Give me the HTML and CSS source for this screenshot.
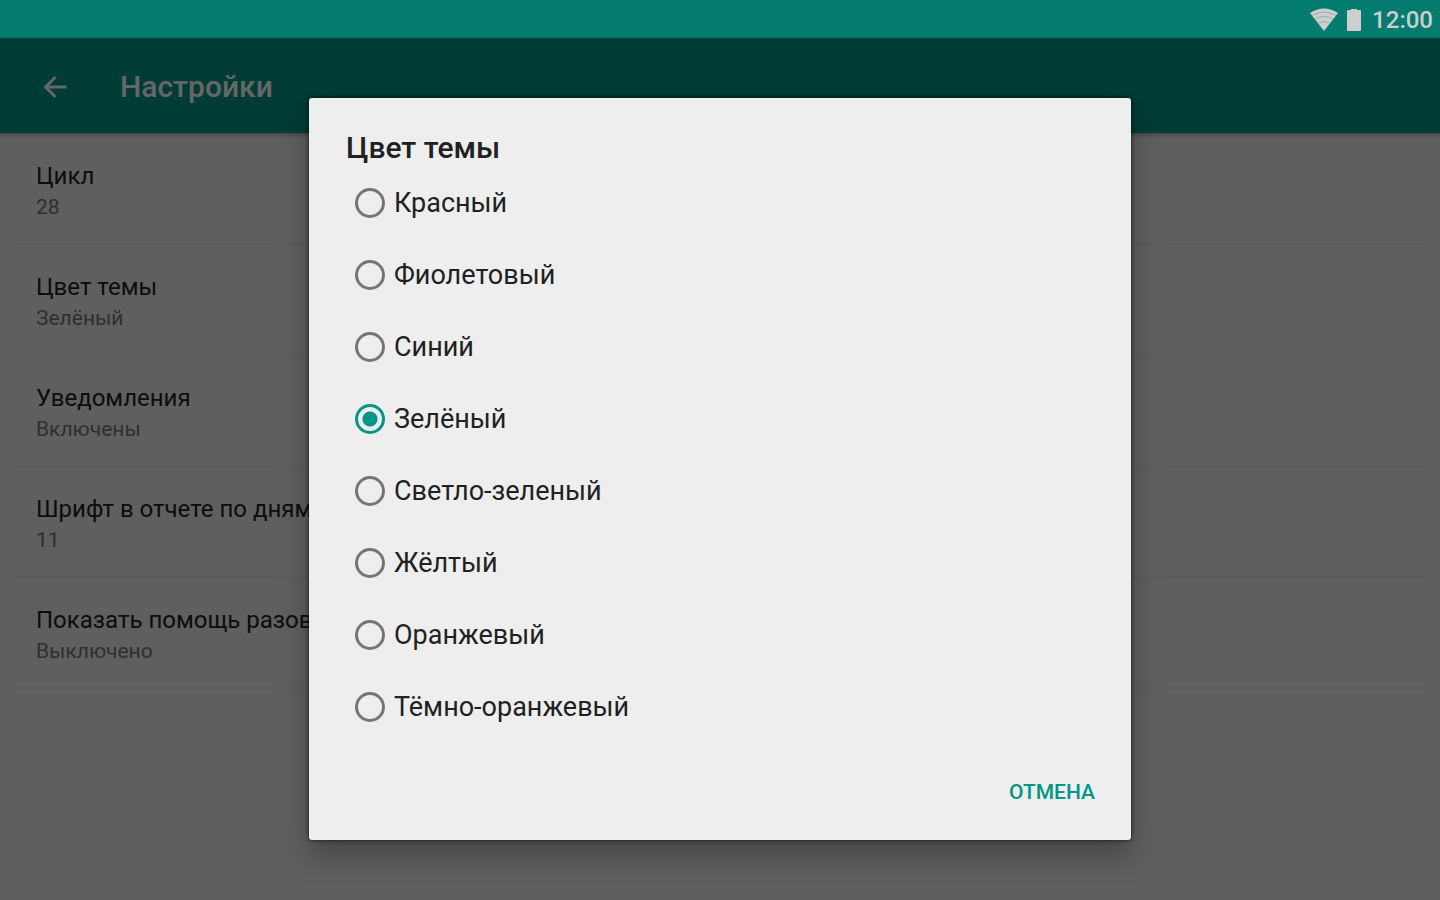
FILE: index.html
```html
<!DOCTYPE html>
<html lang="ru">
<head>
<meta charset="utf-8">
<title>Настройки</title>
<link rel="stylesheet" href="styles.css">
</head>
<body>
<div class="statusbar">
  <svg class="wifi" viewBox="0 0 30 24" aria-hidden="true">
    <path class="fill" d="M1 5Q15-4 29 5L15 23Z"/>
    <path class="arc" d="M3 7.500Q15 .5 27 7.500M6 11Q15 6 24 11M9 15Q15 12 21 15"/>
  </svg>
  <svg class="battery" viewBox="0 0 16 24" aria-hidden="true">
    <path class="fill" d="M5 1h6v1h3q1 0 1 1v19q0 1-1 1H2q-1 0-1-1V3q0-1 1-1h3z"/>
  </svg>
  <span class="clock">12:00</span>
</div>
<div class="screen">
  <header class="toolbar">
    <button class="back" type="button" aria-label="Назад">
      <svg viewBox="0 0 24 24" aria-hidden="true"><path d="M23.500 12H2.500M12.500 2L2.500 12L12.500 22"/></svg>
    </button>
    <h1 class="heading">Настройки</h1>
  </header>
  <ul class="settings">
    <li class="setting"><span class="name">Цикл</span><span class="value">28</span></li>
    <li class="setting"><span class="name">Цвет темы</span><span class="value">Зелёный</span></li>
    <li class="setting"><span class="name">Уведомления</span><span class="value">Включены</span></li>
    <li class="setting"><span class="name">Шрифт в отчете по дням</span><span class="value">11</span></li>
    <li class="setting"><span class="name">Показать помощь разово</span><span class="value">Выключено</span></li>
  </ul>
  <div class="scrim">
    <form class="dialog" role="dialog" aria-labelledby="dialog-title">
      <h2 class="title" id="dialog-title">Цвет темы</h2>
      <div class="options">
        <label class="option"><input type="radio" name="theme">Красный</label>
        <label class="option"><input type="radio" name="theme">Фиолетовый</label>
        <label class="option"><input type="radio" name="theme">Синий</label>
        <label class="option"><input type="radio" name="theme" checked>Зелёный</label>
        <label class="option"><input type="radio" name="theme">Светло-зеленый</label>
        <label class="option"><input type="radio" name="theme">Жёлтый</label>
        <label class="option"><input type="radio" name="theme">Оранжевый</label>
        <label class="option"><input type="radio" name="theme">Тёмно-оранжевый</label>
      </div>
      <div class="actions"><button class="cancel" type="button">ОТМЕНА</button></div>
    </form>
  </div>
</div>
</body>
</html>
```
FILE: styles.css
```css
* { box-sizing: border-box; }
body {
  margin: 0;
  min-height: 100vh;
  display: flex;
  flex-direction: column;
  font-family: Roboto, "Noto Sans", sans-serif;
  color: #212121;
  background: #eee;
}
.statusbar {
  display: flex;
  justify-content: flex-end;
  align-items: center;
  height: 38px;
  padding: 2px 7px 0 0;
  background: #037b6e;
  color: #cccfcd;
}
.wifi { width: 30px; height: 24px; }
.battery { width: 16px; height: 24px; margin: 0 10px 0 7px; }
.fill { fill: #cccfcd; }
.arc { fill: none; stroke: #8fb5ae; stroke-width: 1; }
.clock { font-size: 24px; line-height: 32px; font-weight: 500; }
.screen {
  position: relative;
  flex: 1;
  display: flex;
  flex-direction: column;
}
.toolbar {
  display: flex;
  align-items: center;
  gap: 36px;
  height: 95px;
  padding: 2px 26px 0;
  background: #009688;
  box-shadow: 0 2px 4px rgba(0, 0, 0, .3);
}
.back {
  display: flex;
  justify-content: center;
  width: 58px;
  padding: 0;
  border: 0;
  background: none;
}
.back svg { width: 24px; height: 24px; fill: none; stroke: #fff; stroke-width: 3; }
.heading { margin: 0; font-size: 30px; line-height: 36px; font-weight: 500; color: #fff; }
.settings { list-style: none; margin: 0; padding: 1px 14px 0; }
.setting {
  display: flex;
  flex-direction: column;
  height: 111px;
  padding: 26px 22px 0;
  border-bottom: 2px solid #e6e6e6;
}
.name { font-size: 24px; line-height: 32px; }
.value { font-size: 21px; line-height: 30px; color: #757575; }
.scrim {
  position: absolute;
  inset: 0;
  display: flex;
  align-items: center;
  justify-content: center;
  background: rgba(0, 0, 0, .6);
}
.dialog {
  width: 822px;
  max-width: 90%;
  padding: 32px 36px 24px 37px;
  background: #eee;
  border-radius: 3px;
  box-shadow: 0 0 4px rgba(0, 0, 0, .7), 0 14px 30px rgba(0, 0, 0, .3);
}
.title { margin: 0; font-size: 30px; line-height: 36px; font-weight: 500; }
.options { display: flex; flex-direction: column; padding-top: 1px; }
.option {
  display: flex;
  align-items: center;
  gap: 9px;
  height: 72px;
  padding-left: 9px;
  font-size: 27px;
}
.option input {
  appearance: none;
  width: 30px;
  height: 30px;
  margin: 0;
  border: 3px solid #757575;
  border-radius: 50%;
}
.option input:checked {
  border-color: #009688;
  background: radial-gradient(circle, #009688 7px, transparent 8px);
}
.actions { display: flex; justify-content: flex-end; padding-top: 25px; }
.cancel {
  padding: 8px 0;
  border: 0;
  background: none;
  color: #009688;
  font: 500 21px/32px Roboto, "Noto Sans", sans-serif;
}
```
